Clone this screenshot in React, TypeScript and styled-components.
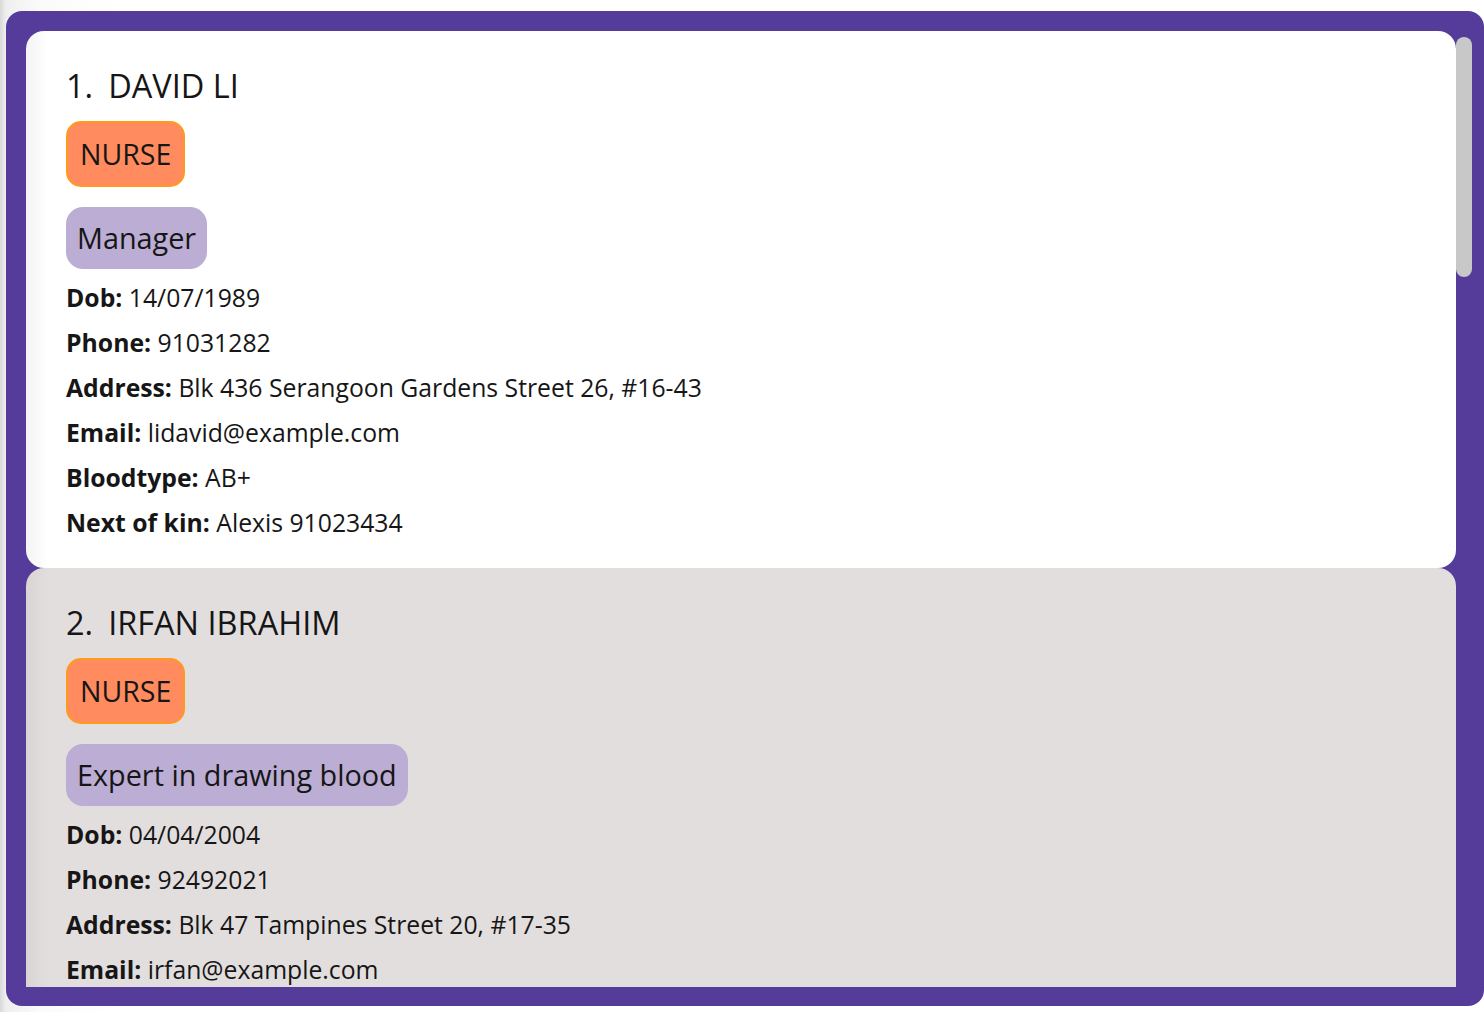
import React from "react";
import styled, { createGlobalStyle } from "styled-components";

const GlobalStyle = createGlobalStyle`
  html, body {
    margin: 0;
    padding: 0;
  }
  body {
    width: 1484px;
    height: 1012px;
    overflow: hidden;
    background: linear-gradient(to right, #d9d9d9 0px, #efefef 6px, #fbfbfb 40px, #ffffff 120px);
    font-family: "Open Sans", "Noto Sans", sans-serif;
    color: #161616;
  }
`;

const Frame = styled.div`
  box-sizing: border-box;
  margin: 11px 0 0 6px;
  width: 1478px;
  height: 995px;
  background: #553c9a;
  border-radius: 16px;
  padding: 20px 12px 19px 20px;
  display: flex;
`;

const List = styled.div`
  flex: 1;
  height: 100%;
  overflow: hidden;
  display: flex;
  flex-direction: column;
`;

const ScrollTrack = styled.div`
  flex: none;
  width: 16px;
  height: 100%;
  padding-top: 6px;
  box-sizing: border-box;
`;

const ScrollThumb = styled.div`
  width: 16px;
  height: 240px;
  border-radius: 8px;
  background: #c8c8c8;
`;

const Card = styled.div<{ $alt?: boolean }>`
  flex: none;
  box-sizing: border-box;
  background-color: ${(p) => (p.$alt ? "#e3dede" : "#ffffff")};
  background-image: linear-gradient(to right, rgba(0, 0, 0, 0.045), rgba(0, 0, 0, 0) 22px);
  border-radius: 18px;
  padding: 35px 40px 23px;
  display: flex;
  flex-direction: column;
  align-items: flex-start;
`;

const Title = styled.div`
  font-size: 32.5px;
  font-weight: 500;
  line-height: 40px;
  height: 40px;
  display: flex;
  gap: 15px;
  white-space: nowrap;
`;

const Role = styled.div`
  margin-top: 15px;
  box-sizing: border-box;
  height: 66px;
  padding: 0 12px;
  border: 2px solid #ff9a1e;
  background: #ff8b5e;
  border-radius: 15px;
  font-size: 28.5px;
  font-weight: 500;
  line-height: 62px;
`;

const Tag = styled.div`
  margin-top: 20px;
  box-sizing: border-box;
  height: 62px;
  padding: 0 11px;
  background: #bcadd4;
  border-radius: 17px;
  font-size: 28.8px;
  font-weight: 500;
  line-height: 62px;
  white-space: nowrap;
`;

const Fields = styled.div`
  margin-top: 6px;
  display: flex;
  flex-direction: column;
`;

const Field = styled.div`
  font-size: 24.75px;
  line-height: 45px;
  height: 45px;
  white-space: nowrap;
`;

const Label = styled.span`
  font-weight: 700;
`;

type Person = {
  name: string;
  role: string;
  tag: string;
  dob: string;
  phone: string;
  address: string;
  email: string;
  blood: string;
  kin: string;
};

const people: Person[] = [
  {
    name: "DAVID LI",
    role: "NURSE",
    tag: "Manager",
    dob: "14/07/1989",
    phone: "91031282",
    address: "Blk 436 Serangoon Gardens Street 26, #16-43",
    email: "lidavid@example.com",
    blood: "AB+",
    kin: "Alexis 91023434",
  },
  {
    name: "IRFAN IBRAHIM",
    role: "NURSE",
    tag: "Expert in drawing blood",
    dob: "04/04/2004",
    phone: "92492021",
    address: "Blk 47 Tampines Street 20, #17-35",
    email: "irfan@example.com",
    blood: "O+",
    kin: "Aisha 93210283",
  },
];

export default function App() {
  return (
    <>
      <GlobalStyle />
      <Frame>
        <List>
          {people.map((p, i) => (
            <Card key={p.name} $alt={i % 2 === 1}>
              <Title>
                <span>{i + 1}.</span>
                <span>{p.name}</span>
              </Title>
              <Role>{p.role}</Role>
              <Tag>{p.tag}</Tag>
              <Fields>
                <Field>
                  <Label>Dob:</Label> {p.dob}
                </Field>
                <Field>
                  <Label>Phone:</Label> {p.phone}
                </Field>
                <Field>
                  <Label>Address:</Label> {p.address}
                </Field>
                <Field>
                  <Label>Email:</Label> {p.email}
                </Field>
                <Field>
                  <Label>Bloodtype:</Label> {p.blood}
                </Field>
                <Field>
                  <Label>Next of kin:</Label> {p.kin}
                </Field>
              </Fields>
            </Card>
          ))}
        </List>
        <ScrollTrack>
          <ScrollThumb />
        </ScrollTrack>
      </Frame>
    </>
  );
}
